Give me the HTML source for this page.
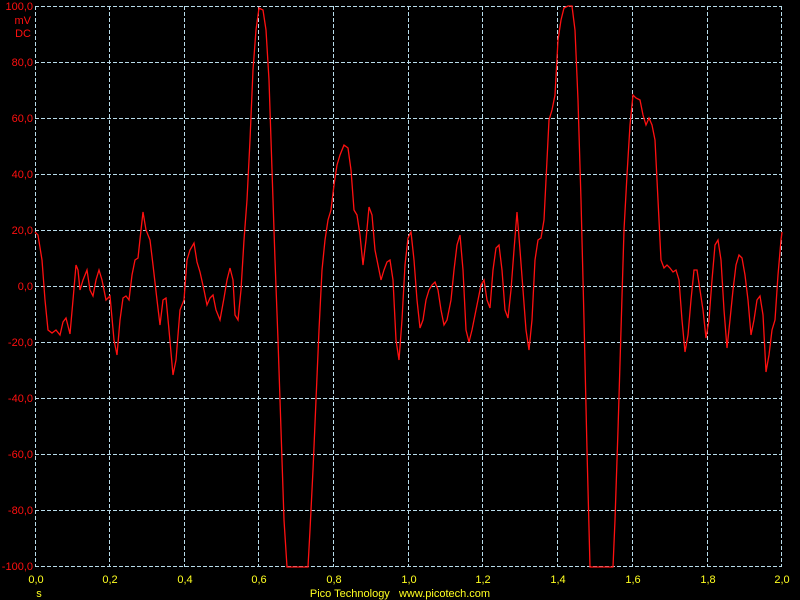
<!DOCTYPE html>
<html><head><style>html,body{margin:0;padding:0;background:#000;width:800px;height:600px;overflow:hidden}</style></head><body>
<svg width="800" height="600" xmlns="http://www.w3.org/2000/svg" style="display:block">
<rect width="800" height="600" fill="#000"/>
<g stroke="#b8dcea" stroke-width="1" stroke-dasharray="4,2" shape-rendering="crispEdges">
<line x1="35.5" y1="6" x2="35.5" y2="567"/><line x1="109.5" y1="6" x2="109.5" y2="567"/><line x1="184.5" y1="6" x2="184.5" y2="567"/><line x1="258.5" y1="6" x2="258.5" y2="567"/><line x1="333.5" y1="6" x2="333.5" y2="567"/><line x1="408.5" y1="6" x2="408.5" y2="567"/><line x1="482.5" y1="6" x2="482.5" y2="567"/><line x1="557.5" y1="6" x2="557.5" y2="567"/><line x1="632.5" y1="6" x2="632.5" y2="567"/><line x1="707.5" y1="6" x2="707.5" y2="567"/><line x1="781.5" y1="6" x2="781.5" y2="567"/>
<line x1="35" y1="6.5" x2="782" y2="6.5"/><line x1="35" y1="62.5" x2="782" y2="62.5"/><line x1="35" y1="118.5" x2="782" y2="118.5"/><line x1="35" y1="174.5" x2="782" y2="174.5"/><line x1="35" y1="230.5" x2="782" y2="230.5"/><line x1="35" y1="286.5" x2="782" y2="286.5"/><line x1="35" y1="342.5" x2="782" y2="342.5"/><line x1="35" y1="398.5" x2="782" y2="398.5"/><line x1="35" y1="454.5" x2="782" y2="454.5"/><line x1="35" y1="510.5" x2="782" y2="510.5"/><line x1="35" y1="566.5" x2="782" y2="566.5"/>
</g>
<polyline fill="none" stroke="#ff1010" stroke-width="1.3" points="35,232 38,235 42,260 45,300 48,330 52,333 56,330 60,335 63,322 66,318 70,334 73,300 76,265 78,270 80,290 83,280 87,270 90,290 93,296 96,280 99,270 102,280 106,300 110,296 114,340 117,355 120,320 123,298 126,296 129,300 132,275 135,260 138,258 141,230 143,212 146,230 150,240 153,265 157,300 160,325 163,300 166,298 169,330 173,375 176,360 180,310 184,300 187,260 190,250 194,243 197,262 200,272 204,290 207,305 210,298 213,295 216,310 220,320 224,298 227,280 230,268 233,280 235,315 238,320 241,290 244,240 247,200 250,140 253,70 256,30 259,8 263,10 266,30 269,80 272,170 275,260 278,340 281,430 284,520 287,567 308,567 310,530 313,470 316,400 319,330 322,270 325,240 328,220 331,210 334,185 337,165 340,155 344,145 348,148 351,170 354,210 357,215 360,235 363,265 366,240 369,207 372,215 375,250 378,265 381,280 384,270 387,262 390,260 393,280 396,340 399,360 402,320 405,265 408,238 411,232 414,260 417,300 420,328 423,320 426,300 429,290 432,285 435,282 438,290 441,310 444,325 447,320 451,300 454,270 457,245 460,235 463,270 466,330 469,342 472,330 475,315 478,300 481,285 484,280 487,300 490,308 493,270 496,248 499,245 502,270 505,310 508,318 511,290 514,250 517,212 520,250 523,290 526,330 529,350 532,320 535,260 538,240 541,238 544,220 546,180 549,120 552,110 555,95 558,40 561,20 564,8 568,6 572,6 575,30 578,100 581,200 584,320 587,450 590,567 613,567 615,520 618,430 621,330 624,230 627,175 630,125 633,95 636,98 640,100 643,115 646,125 649,118 652,125 655,140 658,200 661,260 664,268 667,265 670,268 673,272 676,270 679,280 682,320 685,352 688,335 691,300 694,270 697,270 700,290 703,310 706,338 709,320 712,280 715,245 718,240 721,260 724,310 727,348 730,320 733,290 736,265 739,255 742,258 745,275 748,300 751,335 754,320 757,300 760,296 763,315 766,372 769,355 772,330 775,320 778,275 781,240 782,232"/>
<g fill="#ff1010" font-family="Liberation Sans, sans-serif" font-size="11" text-anchor="end">
<text x="33" y="10">100,0</text><text x="31" y="24">mV</text><text x="31" y="37">DC</text>
<text x="33" y="66">80,0</text><text x="33" y="122">60,0</text><text x="33" y="178">40,0</text><text x="33" y="234">20,0</text><text x="33" y="290">0,0</text><text x="33" y="346">-20,0</text><text x="33" y="402">-40,0</text><text x="33" y="458">-60,0</text><text x="33" y="514">-80,0</text><text x="33" y="570">-100,0</text>
</g>
<g fill="#ffff20" font-family="Liberation Sans, sans-serif" font-size="11" text-anchor="middle">
<text x="36" y="583">0,0</text><text x="110" y="583">0,2</text><text x="185" y="583">0,4</text><text x="259" y="583">0,6</text><text x="334" y="583">0,8</text><text x="409" y="583">1,0</text><text x="483" y="583">1,2</text><text x="558" y="583">1,4</text><text x="633" y="583">1,6</text><text x="708" y="583">1,8</text><text x="782" y="583">2,0</text>
<text x="39" y="597">s</text>
<text x="400" y="597" xml:space="preserve">Pico Technology   www.picotech.com</text>
</g>
</svg>
</body></html>
